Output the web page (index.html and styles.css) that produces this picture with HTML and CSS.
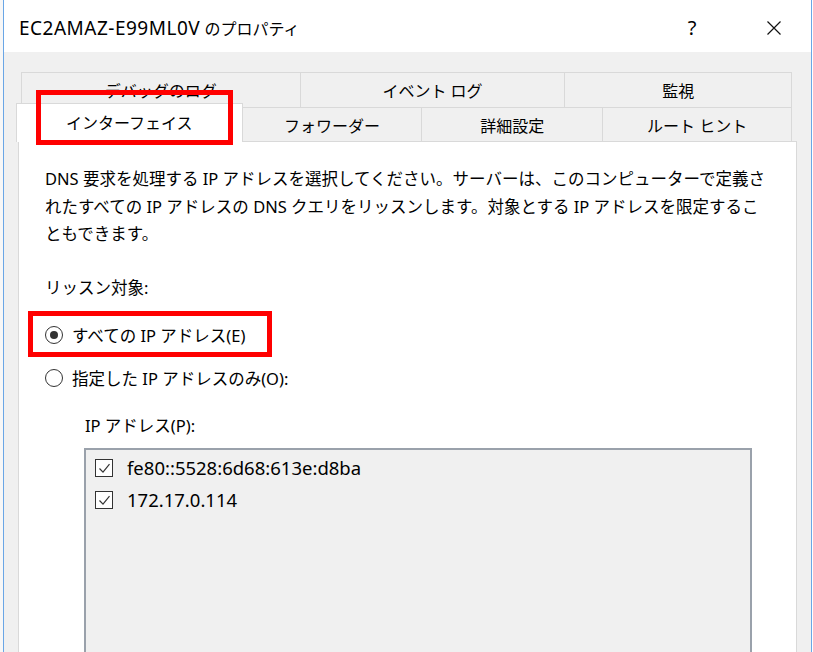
FILE: index.html
```html
<!DOCTYPE html>
<html lang="ja">
<head>
<meta charset="utf-8">
<title>EC2AMAZ-E99ML0V のプロパティ</title>
<link rel="stylesheet" href="styles.css">
</head>
<body>
<div class="screen">
  <div class="backdrop"></div>
  <div class="window">
    <div class="titlebar">
      <div class="title"><span class="title-lat">EC2AMAZ-E99ML0V</span> <span class="title-jp">のプロパティ</span></div>
      <div class="tb-btn help">?</div>
      <div class="tb-btn close">
        <svg width="16" height="16" viewBox="0 0 16 16"><path d="M1.5 1.5 L14.5 14.5 M14.5 1.5 L1.5 14.5" stroke="#111" stroke-width="1.2" fill="none"/></svg>
      </div>
    </div>
    <div class="body">
      <div class="tabs">
        <div class="tabrow back">
          <div class="tab t-debug">デバッグのログ</div>
          <div class="tab t-event">イベント ログ</div>
          <div class="tab t-mon">監視</div>
        </div>
        <div class="tabrow front">
          <div class="tab selected t-if">インターフェイス</div>
          <div class="tab t-fwd">フォワーダー</div>
          <div class="tab t-adv">詳細設定</div>
          <div class="tab t-root">ルート ヒント</div>
        </div>
      </div>
      <div class="panel">
        <p class="desc">DNS 要求を処理する IP アドレスを選択してください。サーバーは、このコンピューターで定義さ<br>れたすべての IP アドレスの DNS クエリをリッスンします。対象とする IP アドレスを限定するこ<br>ともできます。</p>
        <div class="label">リッスン対象:</div>
        <div class="radio-row first">
          <span class="radio checked"></span>
          <span class="radio-text">すべての IP アドレス(E)</span>
        </div>
        <div class="radio-row">
          <span class="radio"></span>
          <span class="radio-text">指定した IP アドレスのみ(O):</span>
        </div>
        <div class="label sub">IP アドレス(P):</div>
        <div class="listbox">
          <div class="item">
            <span class="check"><svg width="17" height="17" viewBox="0 0 17 17"><path d="M3.5 8.5 L7 12.2 L13.5 4.2" stroke="#333" stroke-width="1.2" fill="none"/></svg></span>
            <span class="item-text">fe80::5528:6d68:613e:d8ba</span>
          </div>
          <div class="item">
            <span class="check"><svg width="17" height="17" viewBox="0 0 17 17"><path d="M3.5 8.5 L7 12.2 L13.5 4.2" stroke="#333" stroke-width="1.2" fill="none"/></svg></span>
            <span class="item-text">172.17.0.114</span>
          </div>
        </div>
      </div>
    </div>
  </div>
  <div class="annot a-tab"></div>
  <div class="annot a-radio"></div>
</div>
</body>
</html>
```

FILE: styles.css
```css
html, body {
  margin: 0;
  padding: 0;
  background: #fff;
}

.screen {
  position: relative;
  display: flex;
  width: 813px;
  height: 652px;
  overflow: hidden;
  background: #fff;
  font-family: "Noto Sans", "Noto Sans CJK JP", sans-serif;
  color: #000;
}

.backdrop {
  width: 3px;
  flex: none;
  background: #f7f7f7;
}

.window {
  box-sizing: border-box;
  width: 809px;
  flex: none;
  display: flex;
  flex-direction: column;
  border-left: 1px solid #6aa6e6;
  border-right: 1px solid #6aa6e6;
  background: #f0f0f0;
}

/* title bar */
.titlebar {
  height: 52px;
  flex: none;
  display: flex;
  align-items: center;
  background: #fff;
  padding-top: 3px;
  box-sizing: border-box;
}

.title {
  flex: 1;
  padding-left: 15px;
  white-space: nowrap;
}

.title-lat {
  font-size: 19px;
  letter-spacing: 0.5px;
}

.title-jp {
  font-size: 16px;
}

.tb-btn {
  width: 46px;
  height: 32px;
  display: flex;
  align-items: center;
  justify-content: center;
}

.help {
  font-size: 20px;
}

.close {
  margin-left: 36px;
  margin-right: 14px;
}

/* body */
.body {
  flex: 1;
  display: flex;
  flex-direction: column;
  padding-top: 20px;
  background: #f0f0f0;
}

.tabs {
  margin-left: 17px;
  width: 771px;
  font-size: 16px;
}

.tabrow {
  display: flex;
  align-items: flex-start;
}

.tab {
  box-sizing: border-box;
  display: flex;
  align-items: center;
  justify-content: center;
  border: 1px solid #d9d9d9;
  border-bottom: none;
  background: #f0f0f0;
  white-space: nowrap;
  margin-left: -1px;
}

.tab:first-child {
  margin-left: 0;
}

.back .tab {
  height: 35px;
}

.front {
  height: 34px;
}

.front .tab {
  height: 34px;
  padding-top: 1px;
}

.t-debug { width: 280px; }
.t-event { width: 266px; }
.t-mon   { width: 228px; }

.tab.selected {
  position: relative;
  z-index: 2;
  width: 227px;
  height: 39px;
  margin-left: -5px;
  margin-top: -4px;
  padding-top: 0;
  padding-bottom: 2px;
  background: #fff;
}

.t-fwd  { width: 181px; margin-left: -1px; }
.t-adv  { width: 182px; }
.t-root { width: 190px; }

/* panel */
.panel {
  box-sizing: border-box;
  flex: 1;
  margin-left: 14px;
  width: 779px;
  border: 1px solid #d9d9d9;
  border-bottom: none;
  background: #fff;
  padding: 23px 0 0 26px;
  font-size: 16.5px;
  line-height: 27.5px;
}

.desc {
  margin: 0;
  white-space: nowrap;
}

.label {
  margin-top: 26px;
  white-space: nowrap;
}

.radio-row {
  display: flex;
  align-items: center;
  height: 27.5px;
  margin-top: 15.5px;
}

.radio-row.first {
  margin-top: 20.5px;
}

.radio {
  box-sizing: border-box;
  width: 18px;
  height: 18px;
  border: 1px solid #333;
  border-radius: 50%;
  display: flex;
  align-items: center;
  justify-content: center;
  background: #fff;
  flex: none;
}

.radio.checked::after {
  content: "";
  width: 8px;
  height: 8px;
  border-radius: 50%;
  background: #333;
}

.radio-text {
  margin-left: 9px;
  white-space: nowrap;
}

.label.sub {
  margin-top: 19.5px;
  margin-left: 40px;
}

.listbox {
  box-sizing: border-box;
  margin-top: 9px;
  margin-left: 39px;
  width: 668px;
  height: 260px;
  border: 2px solid #9aa1ab;
  border-bottom: none;
  background: #f0f0f0;
  padding: 2px 0 0 9px;
}

.item {
  display: flex;
  align-items: center;
  height: 32px;
}

.check {
  box-sizing: border-box;
  width: 18px;
  height: 18px;
  border: 1px solid #333;
  background: #fff;
  flex: none;
  display: block;
}

.check svg {
  display: block;
}

.item-text {
  margin-left: 14px;
  font-size: 18.5px;
  white-space: nowrap;
}

/* red annotation rectangles drawn over the screenshot */
.annot {
  position: absolute;
  box-sizing: border-box;
  border: 5px solid #ff0000;
  z-index: 5;
}

.a-tab {
  left: 36px;
  top: 90px;
  width: 197px;
  height: 55px;
}

.a-radio {
  left: 28px;
  top: 311px;
  width: 244px;
  height: 46px;
}
```
